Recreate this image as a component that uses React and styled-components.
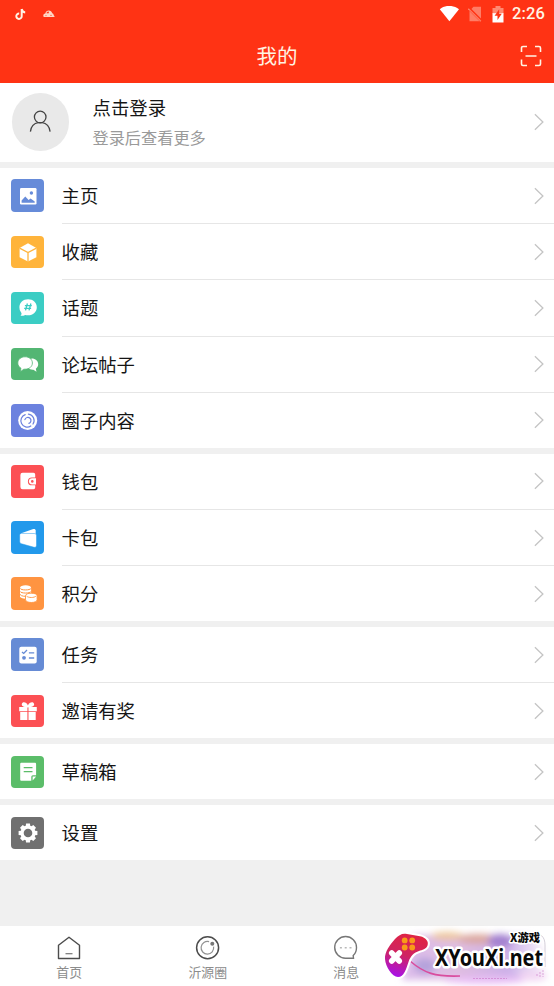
/* --- Packages and Components --- */
import React from 'react';
import styled, { createGlobalStyle } from 'styled-components';

/* --- Styles --- */
const GlobalStyle = createGlobalStyle`
  * {
    box-sizing: border-box;
  }

  body {
    margin: 0;
    background: #f0f0f0;
    font-family: 'Noto Sans CJK SC', sans-serif;
  }

  svg {
    display: block;
    flex: none;
  }
`;

const Screen = styled.div`
  display: flex;
  flex-direction: column;
  height: 986px;
  overflow: hidden;
  background: #f0f0f0;
`;

const Header = styled.header`
  height: 83px;
  flex: none;
  background: #ff3314;
  color: #fff4e4;
`;

const StatusBar = styled.div`
  display: flex;
  align-items: center;
  justify-content: space-between;
  height: 28px;
  padding: 0 9px 0 15px;
`;

const StatusGroup = styled.div`
  display: flex;
  align-items: center;
  gap: ${props => props.gap}px;
`;

const Clock = styled.span`
  margin-left: -1px;
  font: 500 16.5px/28px Roboto, sans-serif;
  letter-spacing: 0.1px;
`;

const TitleBar = styled.div`
  display: grid;
  grid-template-columns: 34px 1fr 34px;
  align-items: center;
  height: 55px;
`;

const Title = styled.h1`
  grid-column: 2;
  margin: 0;
  text-align: center;
  font-size: 20.5px;
  font-weight: 400;
  line-height: 52px;
  height: 54px;
`;

const Profile = styled.div`
  display: flex;
  align-items: center;
  flex: none;
  height: 79.2px;
  padding: 0 9px 1px 11.5px;
  background: #fff;
`;

const Avatar = styled.div`
  display: flex;
  align-items: center;
  justify-content: center;
  width: 57.6px;
  height: 57.6px;
  margin-right: 23.4px;
  border-radius: 50%;
  background: #e9e9e9;
`;

const ProfileText = styled.div`
  flex: 1;
`;

const ProfileName = styled.div`
  color: #151515;
  font-size: 18.4px;
  line-height: 30px;
`;

const ProfileHint = styled.div`
  color: #9a9a9a;
  font-size: 16.2px;
  line-height: 30px;
`;

const Group = styled.div`
  flex: none;
  margin-top: 5.8px;
  background: #fff;
`;

const Row = styled.div`
  display: flex;
  align-items: center;
  height: 55.2px;
  padding: 0 9px 0 11.3px;
`;

const Divider = styled.div`
  height: 1px;
  margin-left: 61.5px;
  background: #e6e6e6;
`;

const IconTile = styled.div`
  display: flex;
  align-items: center;
  justify-content: center;
  width: 32.5px;
  height: 32.5px;
  margin-right: 17.8px;
  border-radius: 4px;
  background: ${props => props.color};
`;

const RowLabel = styled.div`
  flex: 1;
  padding-bottom: 1.2px;
  color: #151515;
  font-size: 18.35px;
  line-height: 30px;
`;

const TabBar = styled.nav`
  position: relative;
  display: grid;
  grid-template-columns: repeat(4, 1fr);
  height: 60.3px;
  margin-top: auto;
  flex: none;
  background: #fff;
`;

const Tab = styled.div`
  display: flex;
  flex-direction: column;
  align-items: center;
  padding-top: 9px;
  color: #8c8c8c;
  font-size: 12.9px;
  line-height: 19px;

  & svg {
    margin-bottom: 1px;
  }
`;

const Watermark = styled.svg`
  position: absolute;
  right: 0;
  bottom: 0;
`;

/* --- Icons --- */
const TileSvg = ({ children }) => (
  <svg width="32" height="32" viewBox="0 0 32 32" fill="#fff">
    {children}
  </svg>
);

const Chevron = () => (
  <svg width="12" height="18" viewBox="0 0 12 18" fill="none">
    <path d="M1.900 1.200 9.900 9l-8 7.800" stroke="#c4c4c4" strokeWidth="1.300" />
  </svg>
);

const ICONS = {
  photo: c => (
    <>
      <rect x="8" y="8" width="16.5" height="16.5" rx="1.2" />
      <circle cx="19.4" cy="13" r="1.7" fill={c} />
      <path d="M9.6 22.8v-2.2l3.7-4 3.300 3.400 2-1.600 4.100 3.200v1.200z" fill={c} />
    </>
  ),
  box: c => (
    <>
      <path d="M16 7.200 24.400 12v9.200L16 25.600 7.600 21.200V12z" />
      <path
        d="m7.600 12.100 8.400 4.400 8.400-4.400M16 16.500v9.300"
        fill="none"
        stroke={c}
        strokeWidth="1.300"
      />
    </>
  ),
  topic: c => (
    <>
      <path d="M16.1 7.200c5 0 8.700 3.400 8.700 8s-3.700 8.100-8.700 8.100c-1.100 0-2-.1-2.800-.4-1.400.7-2.900 1-4.800.9 1-.8 1.200-1.900.9-2.700a7.800 7.800 0 0 1-2-5.800c0-4.700 3.700-8.100 8.700-8.100z" />
      <path
        d="m15.400 11.500-1.900 6.800M18.900 11.500 17 18.300M12.900 13.600h6.900M12.200 16.300h6.900"
        fill="none"
        stroke={c}
        strokeWidth="1.300"
      />
    </>
  ),
  chat: c => (
    <>
      <path d="M19.600 10.500c4 0 6.600 2.600 6.600 5.800 0 1.900-.9 3.400-2.400 4.400l.7 3-3.100-2c-3.800.4-6.700-2-6.700-5.400z" />
      <path
        d="M13.100 8.800c4.200 0 7.300 2.700 7.300 6.200s-3.100 6.200-7.300 6.200h-1.300l-3.600 2.600.8-3.500C7 19.200 5.800 17.200 5.800 15c0-3.500 3.100-6.200 7.300-6.200z"
        stroke={c}
        strokeWidth=".8"
      />
    </>
  ),
  circle: c => (
    <>
      <circle cx="15.700" cy="16.500" r="9.500" />
      <g fill="none" stroke={c} strokeWidth="1.200" strokeLinecap="round">
        <path d="M13.200 10.600a6.400 6.400 0 1 0 5.600 11.400M16.400 10.100a6.400 6.400 0 0 1 4.600 9.900" />
        <path d="M12.900 15.600a3.100 3.100 0 1 1 4 3.800" />
      </g>
    </>
  ),
  wallet: c => (
    <>
      <path d="M10.600 7.800h10.900a1.700 1.700 0 0 1 1.700 1.700v3h-3.400a3.700 3.700 0 0 0 0 7.800h3.400v2.200a1.700 1.700 0 0 1-1.700 1.700H10.600a2.200 2.200 0 0 1-2.200-2.200V10a2.200 2.200 0 0 1 2.200-2.200z" />
      <path d="M20.100 13.200h3.900v6.300h-3.900a3.100 3.100 0 0 1 0-6.300z" />
      <circle cx="20.300" cy="16.400" r="1.300" fill={c} />
    </>
  ),
  cards: c => (
    <>
      <path d="m9.200 11.300 12.100-4.200c1.200-.4 2.400.2 2.400 1.500v4L9.200 12.600z" />
      <path
        d="m9.200 11.400 13 .1c1.500.1 2.300.8 2.300 2.200v9.600c0 1.500-.9 2.300-2.400 2L10.400 22c-1.600-.4-2.700-1-2.700-2.500v-6.300c0-1.100.5-1.800 1.500-1.800z"
        stroke={c}
        strokeWidth=".5"
      />
    </>
  ),
  coins: c => (
    <>
      <path d="M8 9.800c0-1.500 2.500-2.500 5.600-2.500s5.500 1 5.500 2.500v8.500c0 1.500-2.400 2.500-5.500 2.500S8 19.800 8 18.300z" />
      <path
        d="M8 10.300c1 2.200 10 2.200 11.100 0M8 13.400c1 2.200 10 2.200 11.100 0M8 16.400c1.200 2.200 6 2.200 8 1.400"
        fill="none"
        stroke={c}
        strokeWidth="1"
      />
      <path
        d="M13.500 17.700c0-1.500 2.500-2.500 5.800-2.500s5.800 1 5.800 2.500v4c0 1.700-2.500 2.800-5.800 2.800s-5.800-1.100-5.800-2.800z"
        stroke={c}
        strokeWidth=".9"
      />
      <path
        d="M14.500 18c1.800 2 7.800 2 9.600 0"
        fill="none"
        stroke={c}
        strokeWidth=".9"
      />
    </>
  ),
  task: c => (
    <>
      <rect x="7.300" y="7.700" width="17.400" height="16.800" rx="2" />
      <g fill="none" stroke={c} strokeWidth="1.300">
        <path d="m10 12.900 1.700 1.500 3.300-3.400M16.900 13.900h5.300M16.900 19h5.300" />
      </g>
      <circle cx="12" cy="18.800" r="1.900" fill={c} />
    </>
  ),
  gift: () => (
    <>
      <path d="M7.200 11.900h8.200v4.300H7.200zM16.500 11.900h8.300v4.300h-8.300zM8.200 17.100h7.200v7.900H8.200zM16.500 17.100h7.200v7.900h-7.200z" />
      <path d="M15.900 12.400c-4.400 0-7-1.600-5.900-3.900 1.100-2.200 4.700-1.100 5.900 1.900 1.300-3 5-4.100 6-1.900 1.100 2.300-1.600 3.900-6 3.900z" />
    </>
  ),
  note: c => (
    <>
      <path d="M9.600 6.800h13.100c.9 0 1.400.5 1.400 1.400v11h-3.200a1.600 1.600 0 0 0-1.600 1.600v4H9.600c-.9 0-1.400-.5-1.400-1.400V8.200c0-.9.500-1.400 1.400-1.400z" />
      <path d="M20.600 20.600h3.500l-3.500 3.900z" />
      <path
        d="M11.700 11.700h8.800M11.700 15.700h8.800"
        fill="none"
        stroke={c}
        strokeWidth="1.300"
      />
    </>
  ),
  gear: c => (
    <>
      {[0, 45, 90, 135].map(angle => (
        <path
          key={angle}
          d="m14.100 6.600h3.800l.7 4h-5.200zM14.100 25.400h3.800l.7-4h-5.200z"
          transform={`rotate(${angle} 16 16)`}
        />
      ))}
      <circle cx="16" cy="16" r="7.500" />
      <circle cx="16" cy="16" r="4.300" fill={c} />
    </>
  )
};

const GROUPS = [
  [
    { label: '主页', icon: 'photo', color: '#668bd9' },
    { label: '收藏', icon: 'box', color: '#ffb43b' },
    { label: '话题', icon: 'topic', color: '#3bcdc4' },
    { label: '论坛帖子', icon: 'chat', color: '#53b673' },
    { label: '圈子内容', icon: 'circle', color: '#6c82df' }
  ],
  [
    { label: '钱包', icon: 'wallet', color: '#fc5054' },
    { label: '卡包', icon: 'cards', color: '#2299eb' },
    { label: '积分', icon: 'coins', color: '#ff9441' }
  ],
  [
    { label: '任务', icon: 'task', color: '#668bd5' },
    { label: '邀请有奖', icon: 'gift', color: '#fc5054' }
  ],
  [{ label: '草稿箱', icon: 'note', color: '#5bbd69' }],
  [{ label: '设置', icon: 'gear', color: '#707070' }]
];

/* --- Components --- */
const StatusIcons = () => (
  <StatusBar>
    <StatusGroup gap={16}>
      <svg width="12" height="14" viewBox="0 0 12 14">
        <path
          d="M6.700 2v7.200a2.700 2.700 0 1 1-2.500-2.700M6.700 2c.3 2 1.600 3.200 3.500 3.400"
          fill="none"
          stroke="currentColor"
          strokeWidth="2"
        />
      </svg>
      <svg width="12" height="8" viewBox="0 0 12 8" fill="currentColor">
        <path
          d="M.3 5.400c0-1.200.7-1.800 2-2C3 1.300 4 .5 5.800.5s2.800.9 3.400 2.700c1.100.4 1.400 1 1.500 2l1.100 1.200-1 .7H1.500C.7 7 .3 6.300.3 5.400z"
          opacity=".85"
        />
        <path
          d="M3.800 3.100c.4-.9.9-1.300 1.700-1.300v1.300zM2.300 5.600h1.400M7 5.400h2"
          fill="#ff3314"
          stroke="#ff3314"
          strokeWidth=".5"
        />
      </svg>
    </StatusGroup>
    <StatusGroup gap={9}>
      <svg width="20" height="17" viewBox="0 0 20 17">
        <path d="M.8 3.300C6-1.300 14-1.300 20 3.300l-9.600 12z" fill="#fff" />
      </svg>
      <svg width="15" height="16" viewBox="0 0 15 16">
        <path d="M5.500.8H13v14.400H1.500V5z" fill="#ff7d66" />
        <path
          d="m0 1.600 14 14"
          stroke="#ff3314"
          strokeWidth="2.800"
          fill="none"
        />
        <path d="m.3 2.700 12.600 12.500" stroke="#ff7d66" strokeWidth="1.200" />
      </svg>
      <svg width="12" height="17" viewBox="0 0 12 17">
        <path d="M3.500 0h5v2H11.500v6H.5V2h3z" fill="#ff8a72" />
        <path d="M.5 7.200h11v9.300H.5z" fill="#fff" />
        <path d="M7.200 3.300 2.600 9.800H5.500v4.300l4.300-6.300H7.200z" fill="#ff3314" />
      </svg>
      <Clock>2:26</Clock>
    </StatusGroup>
  </StatusBar>
);

const ScanIcon = () => (
  <svg width="22" height="22" viewBox="0 0 22 22" fill="none">
    <path
      d="M1.500 7V3a1.500 1.500 0 0 1 1.500-1.500h4M15 1.500h4A1.500 1.500 0 0 1 20.500 3v4M20.500 14.500V19a1.500 1.500 0 0 1-1.500 1.500h-4M7 20.500H3A1.500 1.500 0 0 1 1.500 19v-4.500M5.500 11h11"
      stroke="currentColor"
      strokeWidth="1.600"
    />
  </svg>
);

const PersonIcon = () => (
  <svg width="24" height="24" viewBox="0 0 24 24" fill="none">
    <g stroke="#444" strokeWidth="1.300">
      <circle cx="12.200" cy="7" r="5.800" />
      <path d="M2.400 21.600c.4-5 3.700-8.600 7.800-9h4c4.200.4 7.500 4 7.900 9" />
    </g>
  </svg>
);

const HomeIcon = () => (
  <svg width="26" height="26" viewBox="0 0 26 26" fill="none">
    <path
      d="M2.500 10.300 13 2.200l10.500 8.100v13.200h-21z"
      stroke="#4c4c4c"
      strokeWidth="1.400"
      strokeLinejoin="round"
    />
    <path d="M9.500 18.700h7" stroke="#777" strokeWidth="1.200" />
  </svg>
);

const OrbitIcon = () => (
  <svg width="26" height="26" viewBox="0 0 26 26" fill="none">
    <circle cx="12.600" cy="12.800" r="11" stroke="#4c4c4c" strokeWidth="1.500" />
    <path
      d="M14.100 6.700a6.300 6.300 0 1 0 4.500 5"
      stroke="#929292"
      strokeWidth="1.200"
    />
    <circle cx="17.300" cy="8.700" r="2" fill="#777" />
  </svg>
);

const MessageIcon = () => (
  <svg width="26" height="26" viewBox="0 0 26 26" fill="none">
    <path
      d="M20.500 23.300h-8A10.900 10.900 0 1 1 23.500 12.400c0 3.300-1.100 6.100-3.300 8.100z"
      stroke="#777"
      strokeWidth="1.400"
    />
    <path
      d="M6.900 12.700h2M11.700 12.700h2M16.500 12.700h2"
      stroke="#b8b8b8"
      strokeWidth="1.400"
    />
  </svg>
);

const SiteMark = () => (
  <Watermark width="174" height="61" viewBox="0 0 174 61">
    <defs>
      <linearGradient id="pad" x1=".6" y1="0" x2=".3" y2="1">
        <stop offset="0" stopColor="#df2444" />
        <stop offset=".5" stopColor="#cf2462" />
        <stop offset="1" stopColor="#a812e8" />
      </linearGradient>
      <linearGradient id="haze" x1="0" y1="0" x2="1" y2="0">
        <stop offset="0" stopColor="#dcbceb" />
        <stop offset=".4" stopColor="#dfbde0" />
        <stop offset=".75" stopColor="#ccb0e8" />
        <stop offset="1" stopColor="#f8f2fa" />
      </linearGradient>
      <filter id="soft" x="-20%" y="-40%" width="140%" height="180%">
        <feGaussianBlur stdDeviation="3.500" />
      </filter>
    </defs>
    <g filter="url(#soft)">
      <path d="M34 10h116l14 14-3 31H22z" fill="url(#haze)" />
      <ellipse cx="67" cy="11" rx="16" ry="4" fill="#edc69a" />
      <ellipse cx="98" cy="14" rx="20" ry="5" fill="#dba79f" />
      <ellipse cx="120" cy="16" rx="12" ry="7" fill="#a27fcf" />
      <ellipse cx="45" cy="41" rx="11" ry="8" fill="#b5a3dc" />
      <ellipse cx="105" cy="55" rx="42" ry="4" fill="#e9bdf5" />
      <ellipse cx="153" cy="51" rx="14" ry="5" fill="#f2d5f3" />
    </g>
    <path
      d="M30 36c14 12 25 16 50 15"
      fill="none"
      stroke="#d94d9e"
      strokeWidth="1.600"
    />
    <path
      d="M93 53.500h34M157 49v3M160 47v5M163 45v7"
      fill="none"
      stroke="#c76fc2"
      strokeWidth="1"
      strokeDasharray="2 1"
      opacity=".55"
    />
    <path
      d="M152 8c9 0 13 4 13 12v22"
      fill="none"
      stroke="#c9c3cf"
      strokeWidth=".8"
    />
    <path
      d="M15 14c4-4 7-6 12-5l13 2.200c6 1.300 9 5.300 7.500 9.300-1.200 3.500-5.500 4.500-8.500 5.500-5 1.500-8.500 5-10.500 11C26 44.500 24 52 18 52S5.500 41.500 5 34c-.5-7 5-14.500 10-20z"
      fill="url(#pad)"
      stroke="#fff"
      strokeWidth="4"
      paintOrder="stroke"
    />
    <g fill="#f99b19">
      <circle cx="24.700" cy="15.400" r="2.900" />
      <circle cx="32.200" cy="15.400" r="2.900" />
      <circle cx="24.700" cy="22.500" r="2.900" />
      <circle cx="32.200" cy="22.500" r="2.900" />
    </g>
    <path
      d="m11.700 28 7.600 8M19.300 28l-7.600 8"
      stroke="#fff"
      strokeWidth="5.500"
      strokeLinecap="round"
    />
    <text
      x="55"
      y="40.700"
      textLength="108"
      lengthAdjust="spacingAndGlyphs"
      fontFamily="'Noto Sans', sans-serif"
      fontSize="23"
      fontWeight="700"
      fill="#090909"
      stroke="#fff"
      strokeWidth="5"
      strokeLinejoin="round"
      paintOrder="stroke"
    >
      XYouXi.net
    </text>
    <text
      x="130"
      y="17"
      textLength="30"
      lengthAdjust="spacingAndGlyphs"
      fontFamily="'Noto Sans CJK SC', sans-serif"
      fontSize="11.500"
      fontWeight="900"
      fill="#090909"
      stroke="#fff"
      strokeWidth="3"
      strokeLinejoin="round"
      paintOrder="stroke"
    >
      X游戏
    </text>
  </Watermark>
);

const MenuGroup = ({ items }) => (
  <Group>
    {items.map((item, index) => (
      <React.Fragment key={item.label}>
        {index > 0 && <Divider />}
        <Row>
          <IconTile color={item.color}>
            <TileSvg>{ICONS[item.icon](item.color)}</TileSvg>
          </IconTile>
          <RowLabel>{item.label}</RowLabel>
          <Chevron />
        </Row>
      </React.Fragment>
    ))}
  </Group>
);

const App = () => (
  <Screen>
    <GlobalStyle />
    <Header>
      <StatusIcons />
      <TitleBar>
        <Title>我的</Title>
        <ScanIcon />
      </TitleBar>
    </Header>
    <Profile>
      <Avatar>
        <PersonIcon />
      </Avatar>
      <ProfileText>
        <ProfileName>点击登录</ProfileName>
        <ProfileHint>登录后查看更多</ProfileHint>
      </ProfileText>
      <Chevron />
    </Profile>
    {GROUPS.map(items => (
      <MenuGroup key={items[0].label} items={items} />
    ))}
    <TabBar>
      <Tab>
        <HomeIcon />
        首页
      </Tab>
      <Tab>
        <OrbitIcon />
        沂源圈
      </Tab>
      <Tab>
        <MessageIcon />
        消息
      </Tab>
      <SiteMark />
    </TabBar>
  </Screen>
);

export default App;
